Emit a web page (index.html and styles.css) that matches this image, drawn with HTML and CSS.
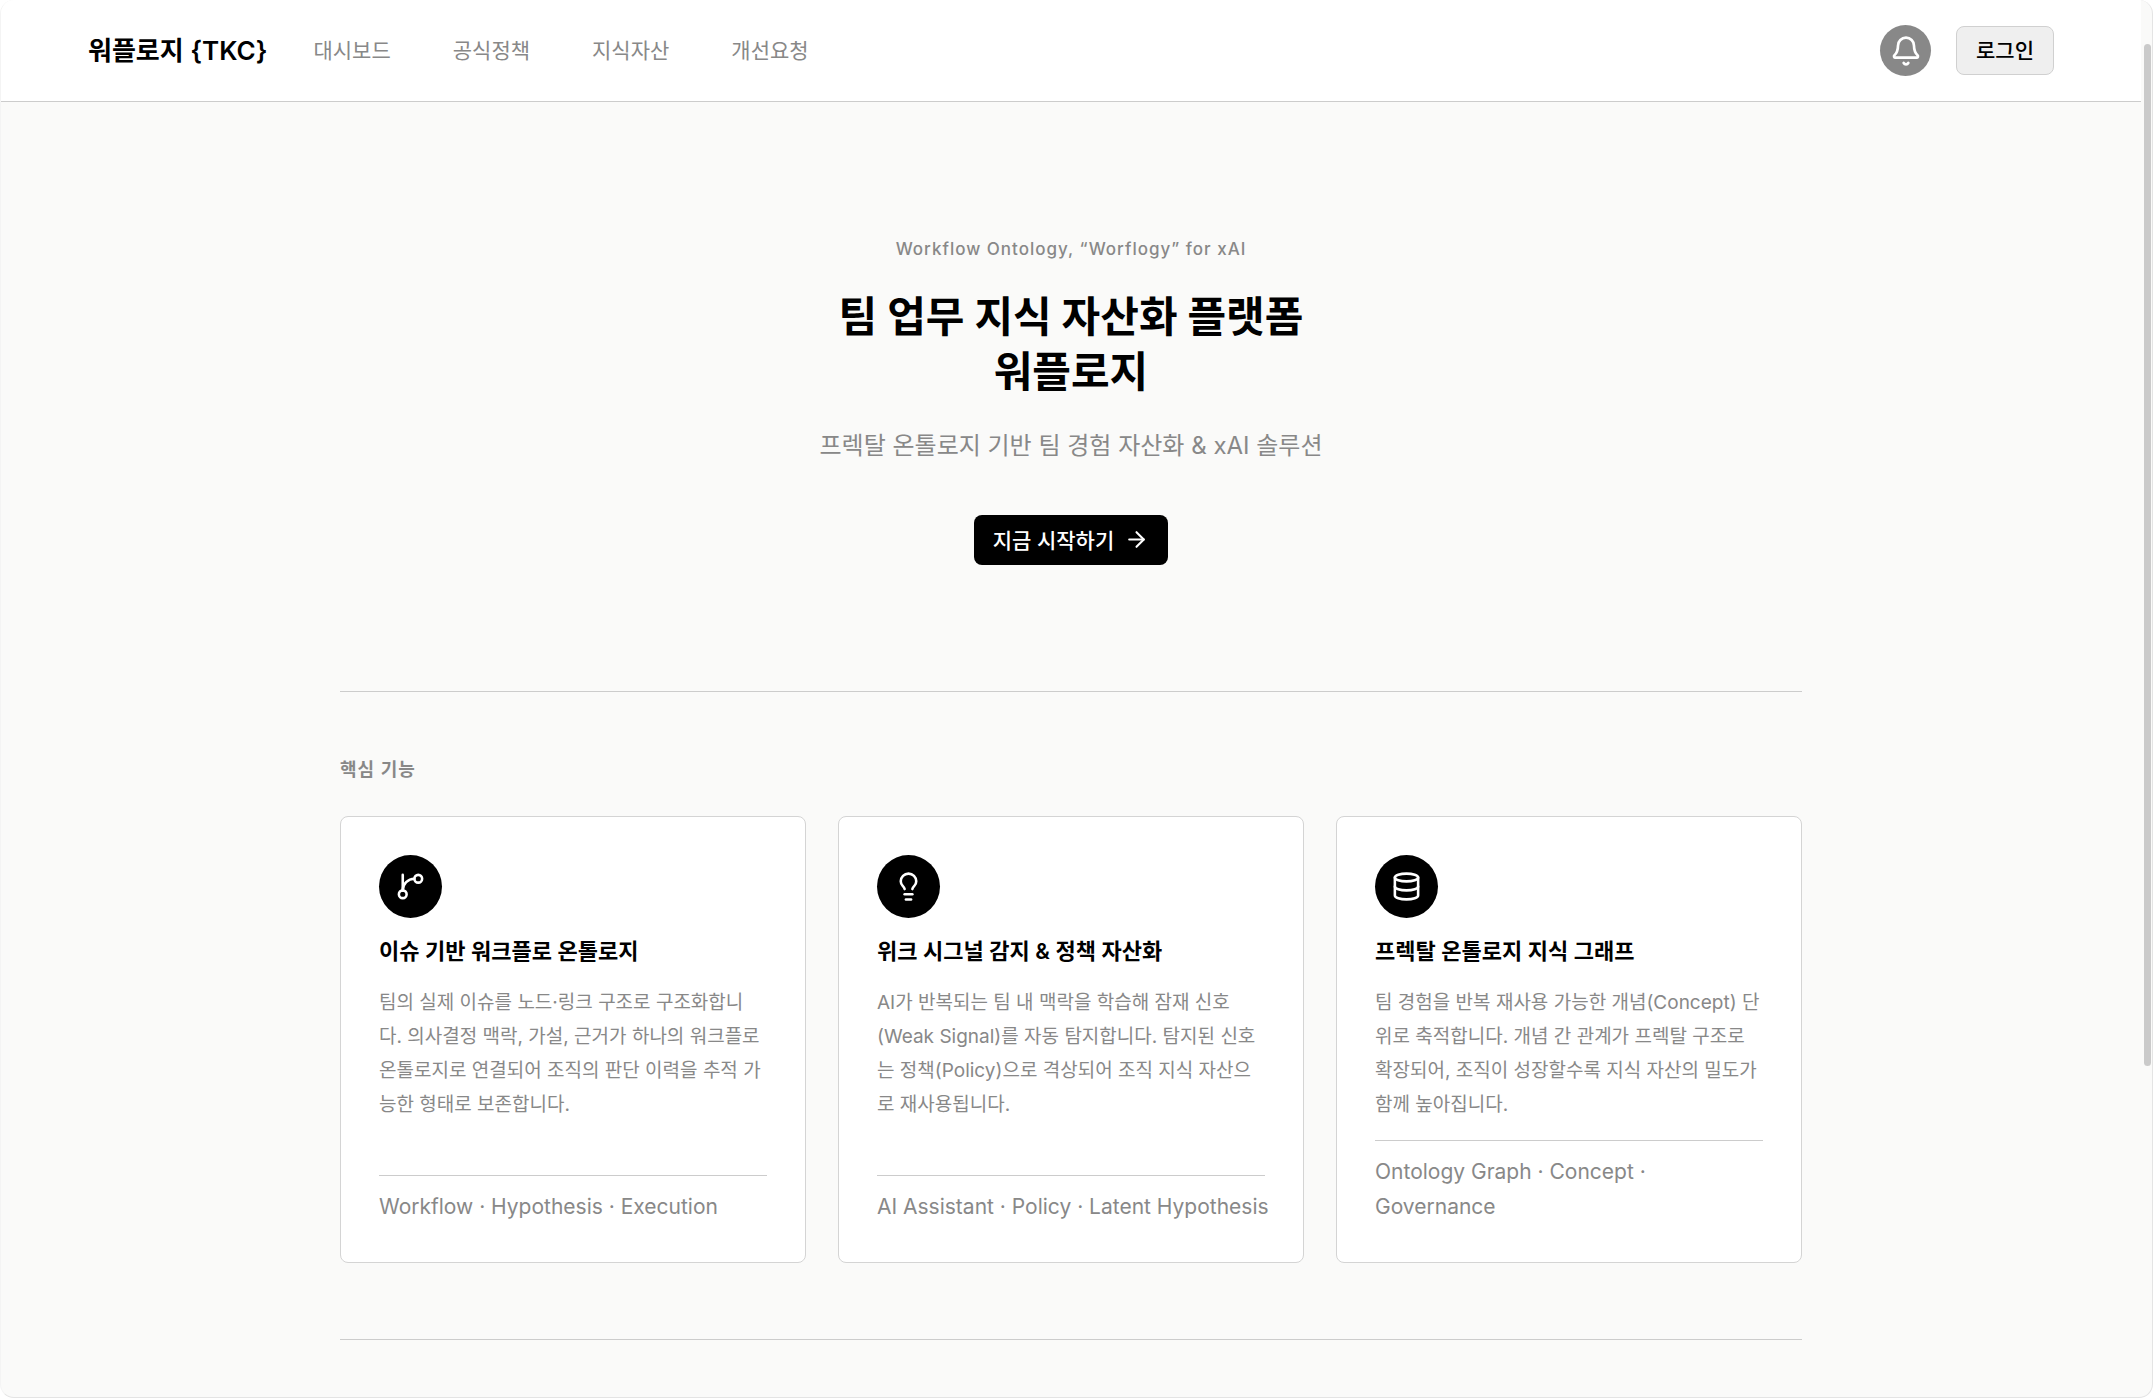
FILE: index.html
```html
<!DOCTYPE html>
<html lang="ko">
<head>
<meta charset="utf-8">
<meta name="viewport" content="width=device-width, initial-scale=1">
<title>워플로지 {TKC}</title>
<link rel="stylesheet" href="styles.css">
</head>
<body>
<div class="window">
  <div class="page">
    <header class="header">
      <a class="brand" href="#">워플로지 {TKC}</a>
      <nav class="nav">
        <a href="#">대시보드</a>
        <a href="#">공식정책</a>
        <a href="#">지식자산</a>
        <a href="#">개선요청</a>
      </nav>
      <div class="actions">
        <button class="bell" type="button" aria-label="알림">
          <svg class="bell-icon" viewBox="0 0 24 24"><path d="M10.268 21a2 2 0 0 0 3.464 0"/><path d="M3.262 15.326A1 1 0 0 0 4 17h16a1 1 0 0 0 .74-1.673C19.41 13.956 18 12.499 18 8A6 6 0 0 0 6 8c0 4.499-1.411 5.956-2.738 7.326"/></svg>
        </button>
        <button class="login" type="button">로그인</button>
      </div>
    </header>
    <main class="main">
      <section class="hero">
        <p class="eyebrow">Workflow Ontology, “Worflogy” for xAI</p>
        <h1 class="title">팀 업무 지식 자산화 플랫폼<br>워플로지</h1>
        <p class="subtitle">프렉탈 온톨로지 기반 팀 경험 자산화 &amp; xAI 솔루션</p>
        <button class="start" type="button">지금 시작하기
          <svg class="arrow-icon" viewBox="0 0 24 24"><path d="M5 12h14"/><path d="m12 5 7 7-7 7"/></svg>
        </button>
      </section>
      <section class="features">
        <h2 class="label">핵심 기능</h2>
        <div class="cards">
          <article class="card">
            <span class="badge"><svg viewBox="0 0 24 24"><path d="M6 3v12"/><circle cx="18" cy="6" r="3"/><circle cx="6" cy="18" r="3"/><path d="M15 6a9 9 0 0 0-9 9"/></svg></span>
            <h3>이슈 기반 워크플로 온톨로지</h3>
            <p class="desc">팀의 실제 이슈를 노드·링크 구조로 구조화합니<br>다. 의사결정 맥락, 가설, 근거가 하나의 워크플로 온톨로지로 연결되어 조직의 판단 이력을 추적 가능한 형태로 보존합니다.</p>
            <p class="tags">Workflow · Hypothesis · Execution</p>
          </article>
          <article class="card">
            <span class="badge"><svg viewBox="0 0 24 24"><path d="M15 14c.2-1 .7-1.7 1.5-2.5 1-.9 1.5-2.2 1.5-3.5A6 6 0 0 0 6 8c0 1 .2 2.2 1.5 3.5.7.7 1.3 1.5 1.5 2.5"/><path d="M9 18h6"/><path d="M10 22h4"/></svg></span>
            <h3>위크 시그널 감지 &amp; 정책 자산화</h3>
            <p class="desc">AI가 반복되는 팀 내 맥락을 학습해 잠재 신호(Weak Signal)를 자동 탐지합니다. 탐지된 신호는 정책(Policy)으로 격상되어 조직 지식 자산으로 재사용됩니다.</p>
            <p class="tags">AI Assistant · Policy · Latent Hypothesis</p>
          </article>
          <article class="card">
            <span class="badge"><svg viewBox="0 0 24 24"><ellipse cx="12" cy="5" rx="9" ry="3"/><path d="M3 5v14a9 3 0 0 0 18 0V5"/><path d="M3 12a9 3 0 0 0 18 0"/></svg></span>
            <h3>프렉탈 온톨로지 지식 그래프</h3>
            <p class="desc">팀 경험을 반복 재사용 가능한 개념(Concept) 단위로 축적합니다. 개념 간 관계가 프렉탈 구조로 확장되어, 조직이 성장할수록 지식 자산의 밀도가 함께 높아집니다.</p>
            <p class="tags">Ontology Graph · Concept ·<br>Governance</p>
          </article>
        </div>
      </section>
    </main>
  </div>
  <div class="scroll-rail"><div class="scroll-thumb"></div></div>
</div>
</body>
</html>
```

FILE: styles.css
```css
* { box-sizing: border-box; margin: 0; padding: 0; }

body {
  background: #fff;
  color: #000;
  font-family: Inter, "Noto Sans CJK KR", sans-serif;
}

a { color: inherit; text-decoration: none; }
button { font-family: inherit; cursor: pointer; }
svg {
  fill: none;
  stroke: currentColor;
  stroke-width: 2;
  stroke-linecap: round;
  stroke-linejoin: round;
}

.window {
  display: flex;
  min-height: 100vh;
  overflow: hidden;
  background: #fafaf9;
  border: 1px solid #e4e4e4;
  border-top-width: 0;
  border-left-color: #f4f4f4;
  border-radius: 14px;
}
.page { flex: 1; min-width: 0; }

.scroll-rail { width: 11px; padding: 44px 1px 0 3px; }
.scroll-thumb { height: 1022px; border-radius: 4px; background: #cacaca; }

.header {
  display: flex;
  align-items: center;
  height: 102px;
  padding: 0 87px;
  background: #fff;
  border-bottom: 1px solid #ccc;
}
.brand { font-size: 26px; font-weight: 600; line-height: 36px; }
.nav { display: flex; gap: 62px; margin-left: 46px; }
.nav a { color: #888; font-size: 21px; line-height: 32px; }
.actions { display: flex; align-items: center; gap: 25px; margin-left: auto; }
.bell {
  display: grid;
  place-items: center;
  width: 51px;
  height: 51px;
  border: 0;
  border-radius: 50%;
  background: #888;
  color: #fff;
}
.bell-icon { width: 32px; height: 32px; }
.login {
  height: 49px;
  padding: 0 19px 3px;
  border: 1px solid #d0d0d0;
  border-radius: 8px;
  background: #efefef;
  font-size: 21px;
  font-weight: 500;
}

.main { max-width: 1462px; margin: 0 auto; }
.hero {
  display: flex;
  flex-direction: column;
  align-items: center;
  padding: 129px 0 126px;
  border-bottom: 1px solid #ccc;
  text-align: center;
}
.eyebrow { color: #888; font-size: 17px; font-weight: 500; line-height: 36px; letter-spacing: 1px; }
.title { margin-top: 22px; font-size: 42px; font-weight: 700; line-height: 55px; }
.subtitle { margin-top: 27px; color: #888; font-size: 24px; line-height: 40px; }
.start {
  display: flex;
  align-items: center;
  gap: 10px;
  height: 50px;
  margin-top: 49px;
  padding: 0 19px 2px;
  border: 0;
  border-radius: 8px;
  background: #000;
  color: #fff;
  font-size: 21px;
  font-weight: 500;
}
.arrow-icon { width: 25px; height: 25px; }

.features { padding: 64px 0 76px; border-bottom: 1px solid #ccc; }
.label { color: #888; font-size: 18px; font-weight: 600; line-height: 28px; letter-spacing: 1px; }
.cards { display: grid; grid-template-columns: repeat(3, 1fr); gap: 32px; margin-top: 32px; }
.card {
  display: flex;
  flex-direction: column;
  min-width: 0;
  padding: 38px;
  border: 1px solid #d4d4d4;
  border-radius: 8px;
  background: #fff;
}
.badge {
  display: grid;
  place-items: center;
  width: 63px;
  height: 63px;
  border-radius: 50%;
  background: #000;
  color: #fff;
}
.badge svg { width: 31px; height: 31px; }
.card h3 { margin-top: 17px; font-size: 22px; font-weight: 600; line-height: 32px; }
.desc { margin: 19px 0 18px; color: #888; font-size: 19px; line-height: 34px; }
.tags {
  margin-top: auto;
  padding-top: 13px;
  border-top: 1px solid #ccc;
  color: #888;
  font-size: 21px;
  line-height: 35px;
  white-space: nowrap;
}
```
